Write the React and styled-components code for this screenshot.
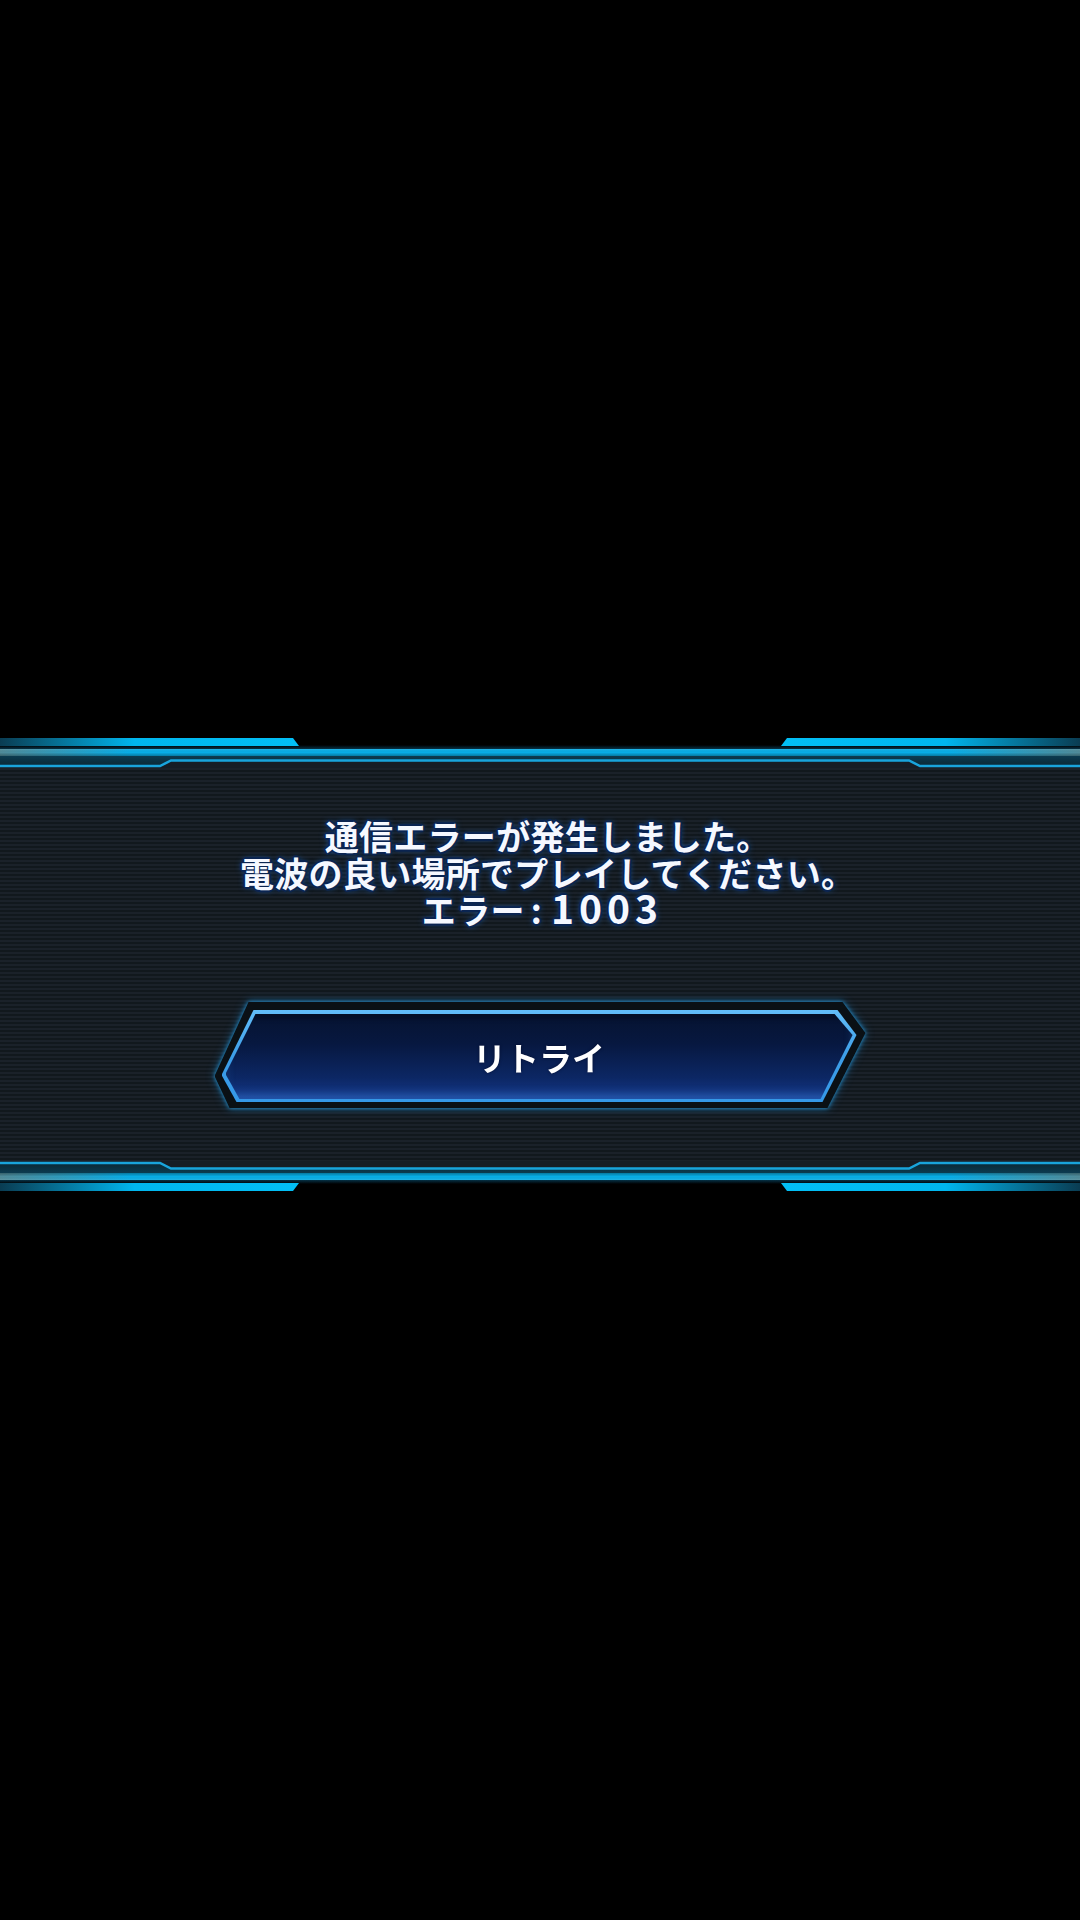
import React, { useId } from 'react'
import styled, { createGlobalStyle } from 'styled-components'

const GlobalStyle = createGlobalStyle`
  html, body {
    margin: 0;
    padding: 0;
    background: #000;
  }
  * {
    box-sizing: border-box;
  }
`;

const Screen = styled.div`
  width: 1080px;
  min-height: 1920px;
  background: #000;
  padding-top: 736px;
  display: flex;
  flex-direction: column;
  font-family: "Noto Sans CJK JP", "Noto Sans", sans-serif;
`;

const Band = styled.section`
  display: flex;
  flex-direction: column;
`;

const TrimSvg = styled.svg`
  display: block;
  width: 1080px;
  height: 32px;
  transform: ${(p) => (p.$flip ? 'scaleY(-1)' : 'none')};
`;

const Body = styled.div`
  padding: 49px 0 53px;
  display: flex;
  flex-direction: column;
  align-items: center;
  background: repeating-linear-gradient(
    to bottom,
    #1a2129 0px,
    #1a2129 2px,
    #11181d 2px,
    #11181d 4px
  );
`;

const Message = styled.p`
  margin: 0;
  display: flex;
  flex-direction: column;
  align-items: center;
  color: #f5f8ff;
  font-size: 34px;
  font-weight: 700;
  line-height: 37px;
  text-shadow:
    0 0 2px #0b2552,
    1px 1px 0 #0b2552,
    -1px -1px 0 #0b2552,
    1px -1px 0 #0b2552,
    -1px 1px 0 #0b2552,
    2px 0 0 #0b2552,
    -2px 0 0 #0b2552,
    0 2px 0 #0b2552,
    0 -2px 0 #0b2552,
    0 0 6px #1d5fb0;
`;

const Line = styled.span`
  display: block;
  height: 37px;
  white-space: nowrap;
  letter-spacing: 0.3px;
`;

const Stop = styled.span`
  margin-right: -0.45em;
`;

const Colon = styled.span`
  margin: 0 9px 0 6px;
`;

const Digits = styled.span`
  font-size: 39px;
  line-height: 30px;
  letter-spacing: 5px;
  margin-right: -5px;
`;

const ButtonGlow = styled.div`
  margin-top: 74px;
  filter: drop-shadow(0 0 2px rgba(40, 170, 240, 0.8))
    drop-shadow(0 0 4px rgba(30, 140, 220, 0.45));
`;

const ButtonFrame = styled.button`
  display: block;
  width: 651px;
  height: 106px;
  padding: 8px 9px 6px 7px;
  border: none;
  background: #0a1015;
  cursor: pointer;
  clip-path: polygon(
    34px 0,
    calc(100% - 23px) 0,
    100% 31px,
    calc(100% - 38px) 100%,
    15px 100%,
    0 calc(100% - 32px)
  );
`;

const ButtonEdge = styled.span`
  display: block;
  width: 100%;
  height: 100%;
  padding: 4px 4px 3px;
  background: linear-gradient(180deg, #62bdf8 0%, #3d9ee8 50%, #3598e8 100%);
  clip-path: polygon(
    32px 0,
    calc(100% - 19px) 0,
    100% 25px,
    calc(100% - 34px) 100%,
    15px 100%,
    0 calc(100% - 27px)
  );
`;

const ButtonFace = styled.span`
  display: flex;
  align-items: center;
  justify-content: center;
  width: 100%;
  height: 100%;
  background: linear-gradient(
    180deg,
    #061331 0%,
    #071840 35%,
    #0c2764 75%,
    #15388a 100%
  );
  box-shadow:
    inset 0 4px 5px rgba(0, 0, 0, 0.35),
    inset 0 -5px 8px rgba(70, 150, 240, 0.35);
  clip-path: polygon(
    30px 0,
    calc(100% - 18px) 0,
    100% 21px,
    calc(100% - 32px) 100%,
    14px 100%,
    0 calc(100% - 25px)
  );
  color: #ffffff;
  font-family: "Noto Sans CJK JP", "Noto Sans", sans-serif;
  font-size: 33px;
  font-weight: 700;
  text-shadow: 0 0 3px rgba(0, 10, 40, 0.8);
`;

const Trim = ({ flip }) => {
  const id = useId().replace(/:/g, '')
  return (
    <TrimSvg $flip={flip} viewBox="0 0 1080 32" width="1080" height="32">
      <defs>
        <linearGradient id={`${id}bl`} x1="0" y1="0" x2="1" y2="0">
          <stop offset="0" stopColor="#0a3c52" />
          <stop offset="0.45" stopColor="#00b6ee" />
          <stop offset="1" stopColor="#02bff6" />
        </linearGradient>
        <linearGradient id={`${id}br`} x1="1" y1="0" x2="0" y2="0">
          <stop offset="0" stopColor="#0a3c52" />
          <stop offset="0.45" stopColor="#00b6ee" />
          <stop offset="1" stopColor="#02bff6" />
        </linearGradient>
        <linearGradient id={`${id}ln`} x1="0" y1="0" x2="1" y2="0">
          <stop offset="0" stopColor="#4f8a98" />
          <stop offset="0.12" stopColor="#08ade6" />
          <stop offset="0.88" stopColor="#08ade6" />
          <stop offset="1" stopColor="#4f8a98" />
        </linearGradient>
        <linearGradient id={`${id}sh`} x1="0" y1="0" x2="0" y2="1">
          <stop offset="0" stopColor="#ffffff" stopOpacity="0.1" />
          <stop offset="0.5" stopColor="#000000" stopOpacity="0" />
          <stop offset="1" stopColor="#000000" stopOpacity="0.3" />
        </linearGradient>
        <linearGradient id={`${id}tl`} x1="0" y1="0" x2="0" y2="1">
          <stop offset="0" stopColor="#0b3b50" />
          <stop offset="1" stopColor="#0b2430" />
        </linearGradient>
        <linearGradient id={`${id}gp`} x1="0" y1="0" x2="0" y2="1">
          <stop offset="0" stopColor="#000000" />
          <stop offset="1" stopColor="#063246" />
        </linearGradient>
      </defs>
      <rect x="0" y="0" width="1080" height="32" fill="#000" />
      <rect x="0" y="9" width="1080" height="4" fill={`url(#${id}gp)`} />
      <polygon points="0,2 293,2 299,10 0,10" fill={`url(#${id}bl)`} />
      <polygon points="787,2 1080,2 1080,10 781,10" fill={`url(#${id}br)`} />
      <rect x="0" y="13" width="1080" height="7" fill={`url(#${id}ln)`} />
      <rect x="0" y="13" width="1080" height="7" fill={`url(#${id}sh)`} />
      <rect x="0" y="20" width="1080" height="12" fill={`url(#${id}tl)`} />
      <polygon
        points="0,31 160,31 171,25.5 909,25.5 920,31 1080,31 1080,32 0,32"
        fill="#161d25"
      />
      <polyline
        points="0,30 160,30 171,24.5 909,24.5 920,30 1080,30"
        fill="none"
        stroke="#19a4dc"
        strokeWidth="2.5"
      />
    </TrimSvg>
  )
}

const App = () => {
  return (
    <Screen>
      <GlobalStyle />
      <Band>
        <Trim />
        <Body>
          <Message>
            <Line>通信エラーが発生しました<Stop>。</Stop></Line>
            <Line>電波の良い場所でプレイしてください<Stop>。</Stop></Line>
            <Line>エラー<Colon>:</Colon><Digits>1003</Digits></Line>
          </Message>
          <ButtonGlow>
            <ButtonFrame type="button">
              <ButtonEdge>
                <ButtonFace>リトライ</ButtonFace>
              </ButtonEdge>
            </ButtonFrame>
          </ButtonGlow>
        </Body>
        <Trim flip />
      </Band>
    </Screen>
  )
}

export default App
